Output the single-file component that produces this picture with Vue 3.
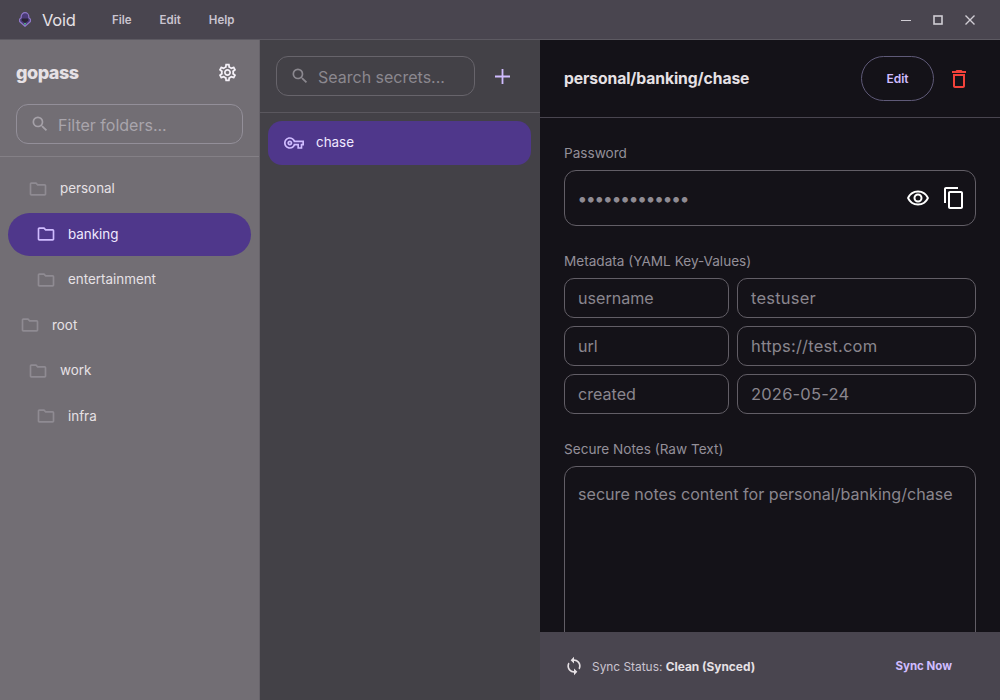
<script setup>
const menus = ['File', 'Edit', 'Help']
const folders = [
  { name: 'personal', depth: 1 },
  { name: 'banking', depth: 2, active: true },
  { name: 'entertainment', depth: 2 },
  { name: 'root', depth: 0 },
  { name: 'work', depth: 1 },
  { name: 'infra', depth: 2 },
]
const meta = [
  ['username', 'testuser'],
  ['url', 'https://test.com'],
  ['created', '2026-05-24'],
]
const depthClass = (f) => ['tree-row', 'd' + f.depth, f.active ? 'active' : '']
const searchPath = 'M15.500 14h-.790l-.280-.270A6.470 6.470 0 0 0 16 9.500 6.500 6.500 0 1 0 9.500 16c1.610 0 3.090-.590 4.230-1.570l.270.280v.790l5 4.990L20.490 19l-4.990-5zm-6 0C7.010 14 5 11.990 5 9.500S7.010 5 9.500 5 14 7.010 14 9.500 11.990 14 9.500 14z'
</script>

<template>
  <div class="app">
    <header class="titlebar">
      <div class="brand">
        <svg class="logo" viewBox="0 0 12 15" width="12" height="15">
          <path d="M6 .7a3.800 3.800 0 0 1 3.800 3.800v1.200l1.600 1.400v2.400L6 14.300.6 9.500V7.100l1.600-1.400V4.500A3.800 3.800 0 0 1 6 .7z" fill="#4a3a78" stroke="#8f78c8" stroke-width="1.200" stroke-linejoin="round"/>
          <path d="M2.800 6.500h6.400v2.300L6 11 2.800 8.800z" fill="#2a2535"/>
          <rect x="5.200" y="11" width="1.600" height="1.600" fill="#4fc38a"/>
        </svg>
        <span class="brand-name">Void</span>
      </div>
      <nav class="menu">
        <span v-for="m in menus" :key="m">{{ m }}</span>
      </nav>
      <div class="win-controls">
        <svg viewBox="0 0 12 12" width="12" height="12"><path d="M1 6.500h10" stroke="#d0cdd4" stroke-width="1"/></svg>
        <svg viewBox="0 0 12 12" width="12" height="12"><rect x="2" y="2" width="8" height="8" fill="none" stroke="#d0cdd4" stroke-width="1.600"/></svg>
        <svg viewBox="0 0 12 12" width="12" height="12"><path d="M1.500 1.500l9 9M10.500 1.500l-9 9" stroke="#d0cdd4" stroke-width="1.400"/></svg>
      </div>
    </header>

    <div class="body">
      <aside class="sidebar">
        <div class="side-head">
          <div class="side-title">
            <span class="wordmark">gopass</span>
            <svg class="gear" viewBox="0 0 24 24" width="21" height="21" fill="#f4f0f7">
              <path d="M19.430 12.980c.04-.32.07-.64.07-.98 0-.34-.03-.66-.07-.98l2.110-1.650c.19-.15.24-.42.12-.64l-2-3.460c-.09-.16-.26-.25-.44-.25-.06 0-.12.01-.17.03l-2.490 1c-.52-.4-1.080-.73-1.690-.98l-.38-2.650C14.460 2.180 14.250 2 14 2h-4c-.25 0-.46.18-.49.42l-.38 2.650c-.61.25-1.170.59-1.690.98l-2.490-1c-.06-.02-.12-.03-.18-.03-.17 0-.34.09-.43.25l-2 3.460c-.13.22-.07.49.12.64l2.110 1.650c-.04.32-.07.65-.07.98 0 .33.03.66.07.98l-2.110 1.650c-.19.15-.24.42-.12.64l2 3.460c.09.16.26.25.44.25.06 0 .12-.01.17-.03l2.490-1c.52.4 1.080.73 1.690.98l.38 2.650c.03.24.24.42.49.42h4c.25 0 .46-.18.49-.42l.38-2.650c.61-.25 1.170-.59 1.690-.98l2.490 1c.06.02.12.03.18.03.17 0 .34-.09.43-.25l2-3.460c.12-.22.07-.49-.12-.64l-2.110-1.650zm-1.980-1.710c.04.31.05.52.05.73 0 .21-.02.43-.05.73l-.14 1.130.89.7 1.080.84-.7 1.210-1.270-.51-1.040-.42-.9.68c-.43.32-.84.56-1.250.73l-1.060.43-.16 1.130-.2 1.350h-1.400l-.19-1.350-.16-1.130-1.060-.43c-.43-.18-.83-.41-1.230-.71l-.91-.7-1.060.43-1.270.51-.7-1.210 1.080-.84.89-.7-.14-1.130c-.03-.31-.05-.54-.05-.74s.02-.43.05-.73l.14-1.130-.89-.7-1.080-.84.7-1.210 1.270.51 1.040.42.9-.68c.43-.32.84-.56 1.250-.73l1.060-.43.16-1.130.2-1.350h1.390l.19 1.350.16 1.130 1.060.43c.43.18.83.41 1.230.71l.91.7 1.060-.43 1.270-.51.7 1.210-1.070.85-.89.7.14 1.130zM12 8c-2.210 0-4 1.790-4 4s1.790 4 4 4 4-1.790 4-4-1.790-4-4-4zm0 6c-1.100 0-2-.9-2-2s.9-2 2-2 2 .9 2 2-.9 2-2 2z"/>
            </svg>
          </div>
          <div class="search light">
            <svg viewBox="0 0 24 24" width="20" height="20" fill="#a5a1a8"><path :d="searchPath"/></svg>
            <span>Filter folders...</span>
          </div>
        </div>
        <ul class="tree">
          <li v-for="f in folders" :key="f.name" :class="depthClass(f)">
            <svg viewBox="0 0 24 24" width="20" height="20" :fill="f.active ? '#d0bcff' : '#8f8b92'">
              <path d="M20 6h-8l-2-2H4c-1.100 0-1.990.9-1.990 2L2 18c0 1.100.9 2 2 2h16c1.100 0 2-.9 2-2V8c0-1.100-.9-2-2-2zm0 12H4V6h5.170l2 2H20v10z"/>
            </svg>
            <span class="tree-label">{{ f.name }}</span>
          </li>
        </ul>
      </aside>

      <section class="list">
        <div class="list-head">
          <div class="search dark">
            <svg viewBox="0 0 24 24" width="20" height="20" fill="#8b888f"><path :d="searchPath"/></svg>
            <span>Search secrets...</span>
          </div>
          <svg class="plus" viewBox="0 0 15 15" width="15" height="15"><path d="M7.500 0v15M0 7.500h15" stroke="#d0bcff" stroke-width="1.800"/></svg>
        </div>
        <div class="secret">
          <svg viewBox="0 0 24 24" width="20" height="20" fill="#d0bcff">
            <path d="M22 19h-6v-4h-2.680c-1.140 2.420-3.590 4-6.320 4-3.860 0-7-3.140-7-7s3.140-7 7-7c2.730 0 5.170 1.580 6.320 4H24v6h-2v4zm-4-2h2v-4h2v-2H11.660l-.230-.67C10.730 8.340 8.970 7 7 7c-2.760 0-5 2.240-5 5s2.240 5 5 5c1.970 0 3.730-1.340 4.430-3.330l.230-.67H18v4zM7 15c-1.650 0-3-1.350-3-3s1.350-3 3-3 3 1.350 3 3-1.350 3-3 3zm0-4c-.55 0-1 .45-1 1s.45 1 1 1 1-.45 1-1-.45-1-1-1z"/>
          </svg>
          <span>chase</span>
        </div>
      </section>

      <main class="detail">
        <div class="detail-head">
          <h1>personal/banking/chase</h1>
          <button class="edit">Edit</button>
          <svg class="trash" viewBox="0 0 24 24" width="24" height="24" fill="#f2423a">
            <path d="M6 19c0 1.100.9 2 2 2h8c1.100 0 2-.9 2-2V7H6v12zM8 9h8v10H8V9zm7.500-5l-1-1h-5l-1 1H5v2h14V4h-3.500z"/>
          </svg>
        </div>
        <div class="form">
          <label>Password</label>
          <div class="pw">
            <span class="dots">•••••••••••••</span>
            <svg viewBox="0 0 24 24" width="24" height="24" fill="#fff"><path d="M12 6.500a9.770 9.770 0 0 1 8.820 5.500A9.770 9.770 0 0 1 12 17.500 9.770 9.770 0 0 1 3.180 12 9.770 9.770 0 0 1 12 6.500m0-2C7 4.500 2.730 7.610 1 12c1.730 4.390 6 7.500 11 7.500s9.270-3.110 11-7.500c-1.730-4.390-6-7.500-11-7.500zm0 5a2.500 2.500 0 1 1 0 5 2.500 2.500 0 0 1 0-5m0-2a4.500 4.500 0 1 0 0 9 4.500 4.500 0 0 0 0-9z"/></svg>
            <svg viewBox="0 0 24 24" width="24" height="24" fill="#fff"><path d="M16 1H4c-1.100 0-2 .9-2 2v14h2V3h12V1zm3 4H8c-1.100 0-2 .9-2 2v14c0 1.100.9 2 2 2h11c1.100 0 2-.9 2-2V7c0-1.100-.9-2-2-2zm0 16H8V7h11v14z"/></svg>
          </div>
          <label class="gap">Metadata (YAML Key-Values)</label>
          <div class="meta">
            <template v-for="row in meta" :key="row[0]">
              <div class="field key">{{ row[0] }}</div>
              <div class="field val">{{ row[1] }}</div>
            </template>
          </div>
          <label class="gap2">Secure Notes (Raw Text)</label>
          <div class="notes">secure notes content for personal/banking/chase</div>
        </div>
        <footer class="status">
          <svg viewBox="0 0 24 24" width="20" height="20" fill="#e6e1e5"><path d="M12 4V1L8 5l4 4V6c3.310 0 6 2.690 6 6 0 1.010-.250 1.970-.7 2.800l1.460 1.460A7.930 7.930 0 0 0 20 12c0-4.420-3.580-8-8-8zm0 14c-3.310 0-6-2.690-6-6 0-1.010.250-1.970.7-2.800L5.240 7.740A7.930 7.930 0 0 0 4 12c0 4.420 3.580 8 8 8v3l4-4-4-4v3z"/></svg>
          <span class="st-text">Sync Status: <b>Clean (Synced)</b></span>
          <span class="sync">Sync Now</span>
        </footer>
      </main>
    </div>
  </div>
</template>

<style>
html, body { margin: 0; background: #141218; }
</style>

<style scoped>
.app { width: 1000px; height: 700px; display: flex; flex-direction: column; overflow: hidden; font-family: Inter, "Noto Sans", sans-serif; color: #e6e1e5; }
.titlebar { height: 39px; flex: none; display: flex; align-items: center; background: #49454f; border-bottom: 1px solid #5d5a62; }
.brand { display: flex; align-items: center; gap: 11px; padding-left: 19px; width: 93px; }
.logo { flex: none; }
.brand-name { font-size: 16.500px; color: #e6e1e5; letter-spacing: -.2px; }
.menu { display: flex; gap: 28px; font-size: 11.500px; font-weight: 600; color: #cac4d0; }
.win-controls { margin-left: auto; display: flex; gap: 20px; padding-right: 24px; }

.body { flex: 1; display: flex; min-height: 0; }
.sidebar { width: 259px; flex: none; background: #726e74; border-right: 1px solid #67636a; }
.side-head { padding: 0 16px; height: 117px; border-bottom: 1px solid #848086; box-sizing: border-box; }
.side-title { display: flex; justify-content: space-between; align-items: center; height: 64px; padding-right: 5px; }
.wordmark { font-size: 18px; font-weight: 800; color: #e6e1e5; letter-spacing: -.5px; }
.search { display: flex; align-items: center; gap: 8px; height: 40px; box-sizing: border-box; border-radius: 12px; padding-left: 13px; font-size: 16px; }
.search span { padding-top: 1px; }
.search.light { border: 1px solid #938f99; color: #a9a5ac; }
.search.dark { border: 1px solid #67646b; color: #8b888f; flex: 1; }
.tree { list-style: none; margin: 0; padding: 10px 8px 0; }
.tree-row { height: 43px; margin-bottom: 2.500px; display: flex; align-items: center; gap: 12px; font-size: 13.400px; color: #e6e1e5; border-radius: 22px; }
.tree-label { padding-bottom: .6px; }
.tree-row.d0 { padding-left: 12px; }
.tree-row.d1 { padding-left: 20px; }
.tree-row.d2 { padding-left: 28px; }
.tree-row.active { background: #4f378b; color: #f0e9ff; }

.list { width: 280px; flex: none; background: #434147; }
.list-head { height: 73px; box-sizing: border-box; padding: 16px 30px 0 16px; display: flex; align-items: flex-start; gap: 20px; border-bottom: 1px solid #5a575e; }
.plus { margin-top: 13px; flex: none; }
.secret { margin: 8px 9px 8px 8px; height: 44px; border-radius: 14px; background: #4f378b; display: flex; align-items: center; gap: 12px; padding-left: 16px; font-size: 13.400px; color: #f0e9ff; }
.secret span { padding-bottom: 2px; }

.detail { flex: 1; display: flex; flex-direction: column; background: #141218; min-width: 0; }
.detail-head { height: 78px; flex: none; box-sizing: border-box; display: flex; align-items: center; padding: 0 24px; border-bottom: 1px solid #49454f; }
.detail-head h1 { margin: 0; font-size: 15.700px; font-weight: 700; color: #e6e1e5; letter-spacing: -.1px; flex: 1; }
.edit { width: 73px; height: 45px; margin-right: 13px; background: none; border: 1px solid #5f5a78; border-radius: 23px; color: #d0bcff; font: 600 12px Inter, sans-serif; }
.trash { flex: none; margin-right: 5px; }
.form { flex: 1; min-height: 0; padding: 26px 24px 0; overflow: hidden; display: flex; flex-direction: column; }
label { font-size: 13.600px; line-height: 18px; color: #938f99; display: block; }
.pw { margin-top: 8px; height: 56px; box-sizing: border-box; border: 1px solid #625e66; border-radius: 12px; display: flex; align-items: center; gap: 12px; padding: 0 9px 0 12.300px; flex: none; }
.dots { flex: 1; color: #8f8b93; font-size: 18px; letter-spacing: -1.600px; }
.gap { margin-top: 26px; }
.meta { margin-top: 8px; display: grid; grid-template-columns: 165px 239px; gap: 8px; flex: none; }
.field { height: 40px; box-sizing: border-box; border: 1px solid #625e66; border-radius: 10px; padding-left: 13px; display: flex; align-items: center; color: #8a868e; }
.field.key { font-size: 16.100px; }
.field.val { font-size: 16.500px; letter-spacing: .2px; }
.gap2 { margin-top: 26px; }
.notes { margin-top: 8px; height: 200px; flex: none; box-sizing: border-box; border: 1px solid #625e66; border-radius: 12px; padding: 16px 13px; font-size: 16.100px; line-height: 22px; color: #8a868e; white-space: nowrap; }
.status { height: 68px; flex: none; background: #49454f; display: flex; align-items: center; padding: 0 48px 0 24px; font-size: 11.900px; color: #cac4d0; }
.st-text { margin-left: 8px; flex: 1; }
.st-text b { color: #e6e1e5; font-weight: 700; }
.sync { color: #d0bcff; font-weight: 700; font-size: 11.500px; }
</style>
